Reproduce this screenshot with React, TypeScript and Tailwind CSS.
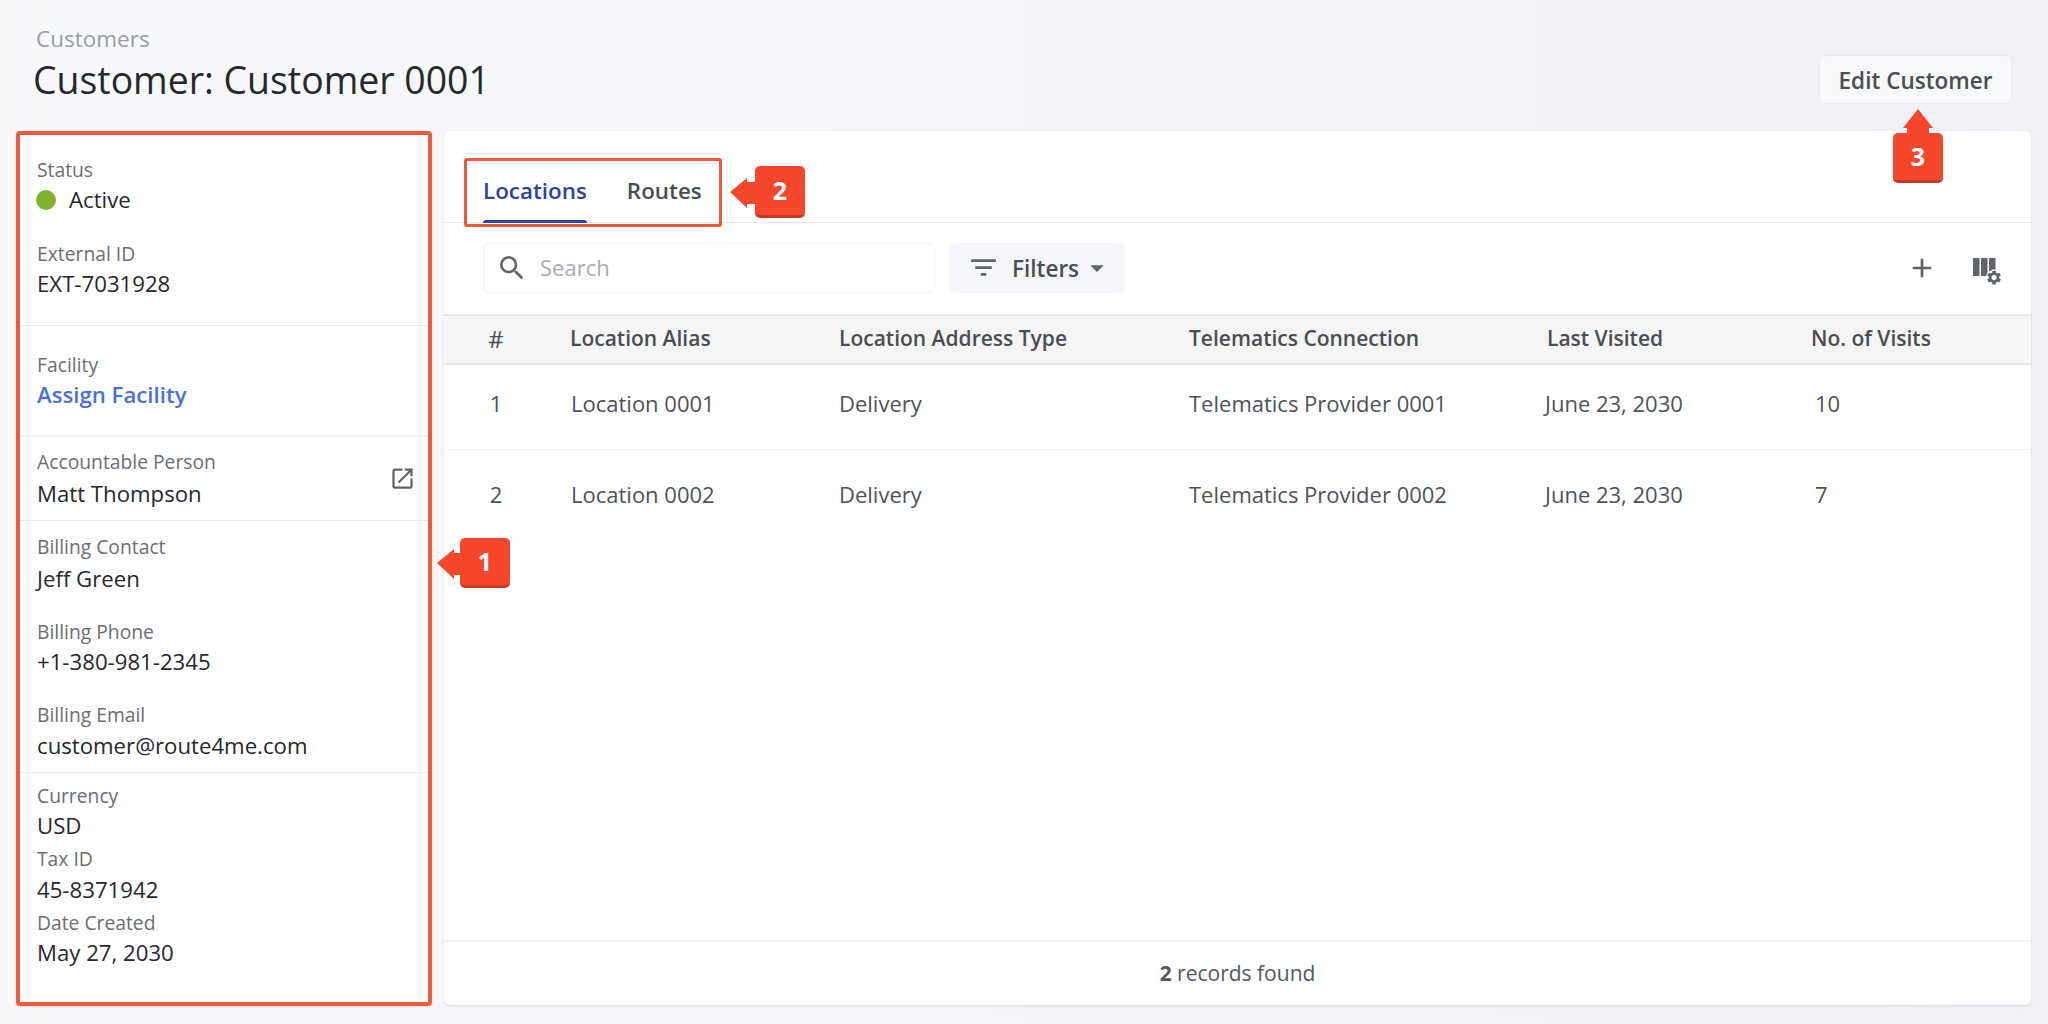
import { MdSearch, MdFilterList, MdArrowDropDown, MdAdd, MdOpenInNew } from 'react-icons/md';

const columns = ['Location Alias', 'Location Address Type', 'Telematics Connection', 'Last Visited', 'No. of Visits'];

const rows = [
  { id: 1, alias: 'Location 0001', type: 'Delivery', provider: 'Telematics Provider 0001', visited: 'June 23, 2030', visits: '10' },
  { id: 2, alias: 'Location 0002', type: 'Delivery', provider: 'Telematics Provider 0002', visited: 'June 23, 2030', visits: '7' },
];

const gridCols = 'grid grid-cols-[126px_269px_350px_358px_264px_1fr] items-center';

function Field({
  label,
  value,
  className = '',
  valueClass = 'text-[#26282c]',
}: {
  label: string;
  value: React.ReactNode;
  className?: string;
  valueClass?: string;
}): React.ReactElement {
  return (
    <div className={className}>
      <p className="h-[28px] text-[19.3px] leading-[28px] text-[#6b6e73]">{label}</p>
      <div className={`h-[32px] text-[22.2px] leading-[32px] ${valueClass}`}>{value}</div>
    </div>
  );
}

function ColumnsIcon(): React.ReactElement {
  return (
    <svg width="28" height="28" viewBox="0 0 28 28" fill="#616469" className="overflow-visible">
      <rect x="1" y="3" width="6.5" height="18" />
      <rect x="9" y="3" width="6.5" height="18" />
      <rect x="17" y="3" width="6.5" height="13" />
      <g transform="translate(13.4 13.9) scale(0.72)">
        <path
          stroke="#fff"
          strokeWidth="3"
          paintOrder="stroke"
          d="M19.14 12.94c.04-.3.06-.61.06-.94 0-.32-.02-.64-.07-.94l2.03-1.58c.18-.14.23-.41.12-.61l-1.92-3.32c-.12-.22-.37-.29-.59-.22l-2.39.96c-.5-.38-1.03-.7-1.62-.94l-.36-2.54c-.04-.24-.24-.41-.48-.41h-3.84c-.24 0-.43.17-.47.41l-.36 2.54c-.59.24-1.13.57-1.62.94l-2.39-.96c-.22-.08-.47 0-.59.22L2.74 8.87c-.12.21-.08.47.12.61l2.03 1.58c-.05.3-.09.63-.09.94s.02.64.07.94l-2.03 1.58c-.18.14-.23.41-.12.61l1.92 3.32c.12.22.37.29.59.22l2.39-.96c.5.38 1.03.7 1.62.94l.36 2.54c.05.24.24.41.48.41h3.84c.24 0 .44-.17.47-.41l.36-2.54c.59-.24 1.13-.56 1.62-.94l2.39.96c.22.08.47 0 .59-.22l1.92-3.32c.12-.22.07-.47-.12-.61l-2.01-1.58zM12 15.6c-1.98 0-3.6-1.62-3.6-3.6s1.62-3.6 3.6-3.6 3.6 1.62 3.6 3.6-1.62 3.6-3.6 3.6z"
        />
      </g>
    </svg>
  );
}

function Callouts(): React.ReactElement {
  const badge =
    'absolute flex items-center justify-center rounded-[5px] border-b-[3px] border-[#c93a25] bg-[#f4472b] text-[25px] font-bold text-white';
  return (
    <>
      {/* outline round the tabs */}
      <div className="absolute left-[464px] top-[158px] h-[69px] w-[258px] rounded-[3px] border-[3px] border-[#ee5a3c]" />

      <svg className="absolute left-[437px] top-[549px]" width="24" height="30" viewBox="0 0 24 30" fill="#f4472b">
        <polygon points="0,14 17,0 17,4 24,4 24,26 17,26 17,30" />
      </svg>
      <div className={`${badge} left-[460px] top-[538px] h-[50px] w-[50px]`}>1</div>

      <svg className="absolute left-[730px] top-[178px]" width="26" height="30" viewBox="0 0 26 30" fill="#f4472b">
        <polygon points="0,14 17,0 17,4 26,4 26,26 17,26 17,30" />
      </svg>
      <div className={`${badge} left-[755px] top-[166px] h-[52px] w-[50px]`}>2</div>

      <svg className="absolute left-[1903px] top-[109px]" width="30" height="25" viewBox="0 0 30 25" fill="#f4472b">
        <polygon points="15,0 30,19 26,19 26,25 4,25 4,19 0,19" />
      </svg>
      <div className={`${badge} left-[1893px] top-[133px] h-[50px] w-[50px]`}>3</div>
    </>
  );
}

export default function App(): React.ReactElement {
  return (
    <div className="relative h-[1024px] w-[2048px] overflow-hidden bg-gradient-to-r from-[#f8f9fb] to-[#eff1f6] font-['Open_Sans',sans-serif]">
      <header className="flex h-[131px] items-start justify-between pl-[33px] pr-[36px]">
        <div>
          <p className="mt-[25px] pl-[3px] text-[22.5px] leading-[28px] text-[#9a9da3]">Customers</p>
          <h1 className="mt-[1px] text-[37.4px] leading-[52px] text-[#26282c]">Customer: Customer 0001</h1>
        </div>
        <button className="mt-[55px] h-[49px] w-[193px] rounded-[6px] border border-[#e9ebf0] bg-[#f8f9fb] pt-[2px] text-[22.5px] font-semibold text-[#4a4d52]">
          Edit Customer
        </button>
      </header>

      <div className="flex h-[875px] gap-[12px] pl-[16px] pr-[17px]">
        <aside className="h-[875px] w-[416px] shrink-0 rounded-[4px] border-[4px] border-[#ee5a3c] bg-white shadow-sm">
          <section className="h-[191px] border-b border-[#ececec] pl-[17px] pt-[21px]">
            <Field
              label="Status"
              value={
                <span className="flex items-center gap-[13px]">
                  <span className="-ml-px h-[20px] w-[20px] rounded-full bg-[#80b22d]" />
                  Active
                </span>
              }
            />
            <Field label="External ID" value="EXT-7031928" className="mt-[24px]" />
          </section>
          <section className="h-[111px] border-b-2 border-[#f1f1f1] pl-[17px] pt-[25px]">
            <Field label="Facility" value="Assign Facility" valueClass="font-semibold text-[#4a6fdc]" />
          </section>
          <section className="flex h-[84px] items-center justify-between border-b border-[#ececec] pl-[17px] pr-[12px]">
            <Field label="Accountable Person" value="Matt Thompson" valueClass="mt-[2px] text-[#26282c]" />
            <MdOpenInNew className="h-[27px] w-[27px] text-[#616469]" />
          </section>
          <section className="h-[252px] border-b border-[#ececec] pl-[17px] pt-[12px]">
            <Field label="Billing Contact" value="Jeff Green" valueClass="mt-[2px] text-[#26282c]" />
            <Field label="Billing Phone" value="+1-380-981-2345" className="mt-[23px]" />
            <Field label="Billing Email" value="customer@route4me.com" valueClass="mt-[1px] text-[#26282c]" className="mt-[23px]" />
          </section>
          <section className="pl-[17px] pt-[9px]">
            <Field label="Currency" value="USD" />
            <Field label="Tax ID" value="45-8371942" valueClass="mt-[1px] text-[#26282c]" className="mt-[3px]" />
            <Field label="Date Created" value="May 27, 2030" className="mt-[3px]" />
          </section>
        </aside>

        <main className="flex h-[874px] min-w-0 flex-1 flex-col rounded-[6px] bg-white shadow-sm">
          <div className="flex h-[92px] items-end gap-[40px] border-b border-[#e6e7ea] pl-[39px]">
            <div className="-mb-px flex h-[70px] flex-col justify-between pt-[22px] text-[22.4px] font-semibold leading-[32px] text-[#2d439e]">
              Locations
              <span className="h-[3px] rounded-t-[3px] bg-[#2d439e]" />
            </div>
            <div className="h-[70px] pt-[23px] text-[22.4px] font-semibold leading-[32px] text-[#4a4d52]">Routes</div>
          </div>

          <div className="flex h-[91px] items-center pb-[2px] pl-[39px] pr-[31px]">
            <div className="flex h-[50px] w-[452px] items-center rounded-[6px] border border-[#f0f1f3] pl-[12px]">
              <MdSearch className="h-[32px] w-[32px] text-[#616469]" />
              <span className="ml-[12px] text-[22px] text-[#a8abb0]">Search</span>
            </div>
            <div className="ml-[14px] flex h-[50px] w-[176px] items-center rounded-[6px] bg-[#f4f6fb] pl-[18px]">
              <MdFilterList className="h-[33px] w-[33px] text-[#616469]" />
              <span className="ml-[12px] pt-[2px] text-[22.5px] font-semibold text-[#4a4d52]">Filters</span>
              <MdArrowDropDown className="ml-[2px] h-[32px] w-[32px] text-[#616469]" />
            </div>
            <MdAdd className="ml-auto h-[32px] w-[32px] text-[#616469]" />
            <div className="ml-[34px] mt-[2px] h-[28px]">
              <ColumnsIcon />
            </div>
          </div>

          <div className={`${gridCols} h-[51px] border-y-2 border-[#e4e5e7] bg-[#f5f5f5] pb-[1px] text-[21px] font-semibold text-[#4a4d52]`}>
            <span className="pr-[22px] text-center text-[24px] font-normal">#</span>
            {columns.map(col => (
              <span key={col}>{col}</span>
            ))}
          </div>

          {rows.map((row, index) => (
            <div
              key={row.id}
              className={
                index === 0
                  ? `${gridCols} h-[85px] border-b border-[#f5f5f5] pb-[7px] text-[22px] text-[#4f5257]`
                  : `${gridCols} h-[92px] pb-[3px] text-[22px] text-[#4f5257]`
              }
            >
              <span className="pr-[22px] text-center">{row.id}</span>
              <span className="pl-px">{row.alias}</span>
              <span>{row.type}</span>
              <span>{row.provider}</span>
              <span className="-ml-[2px]">{row.visited}</span>
              <span className="pl-[4px]">{row.visits}</span>
            </div>
          ))}

          <div className="mt-auto flex h-[65px] items-center justify-center border-t-2 border-[#f3f3f3] text-[21px] text-[#55585d]">
            <span>
              <b className="font-bold">2</b> records found
            </span>
          </div>
        </main>
      </div>

      <Callouts />
    </div>
  );
}
